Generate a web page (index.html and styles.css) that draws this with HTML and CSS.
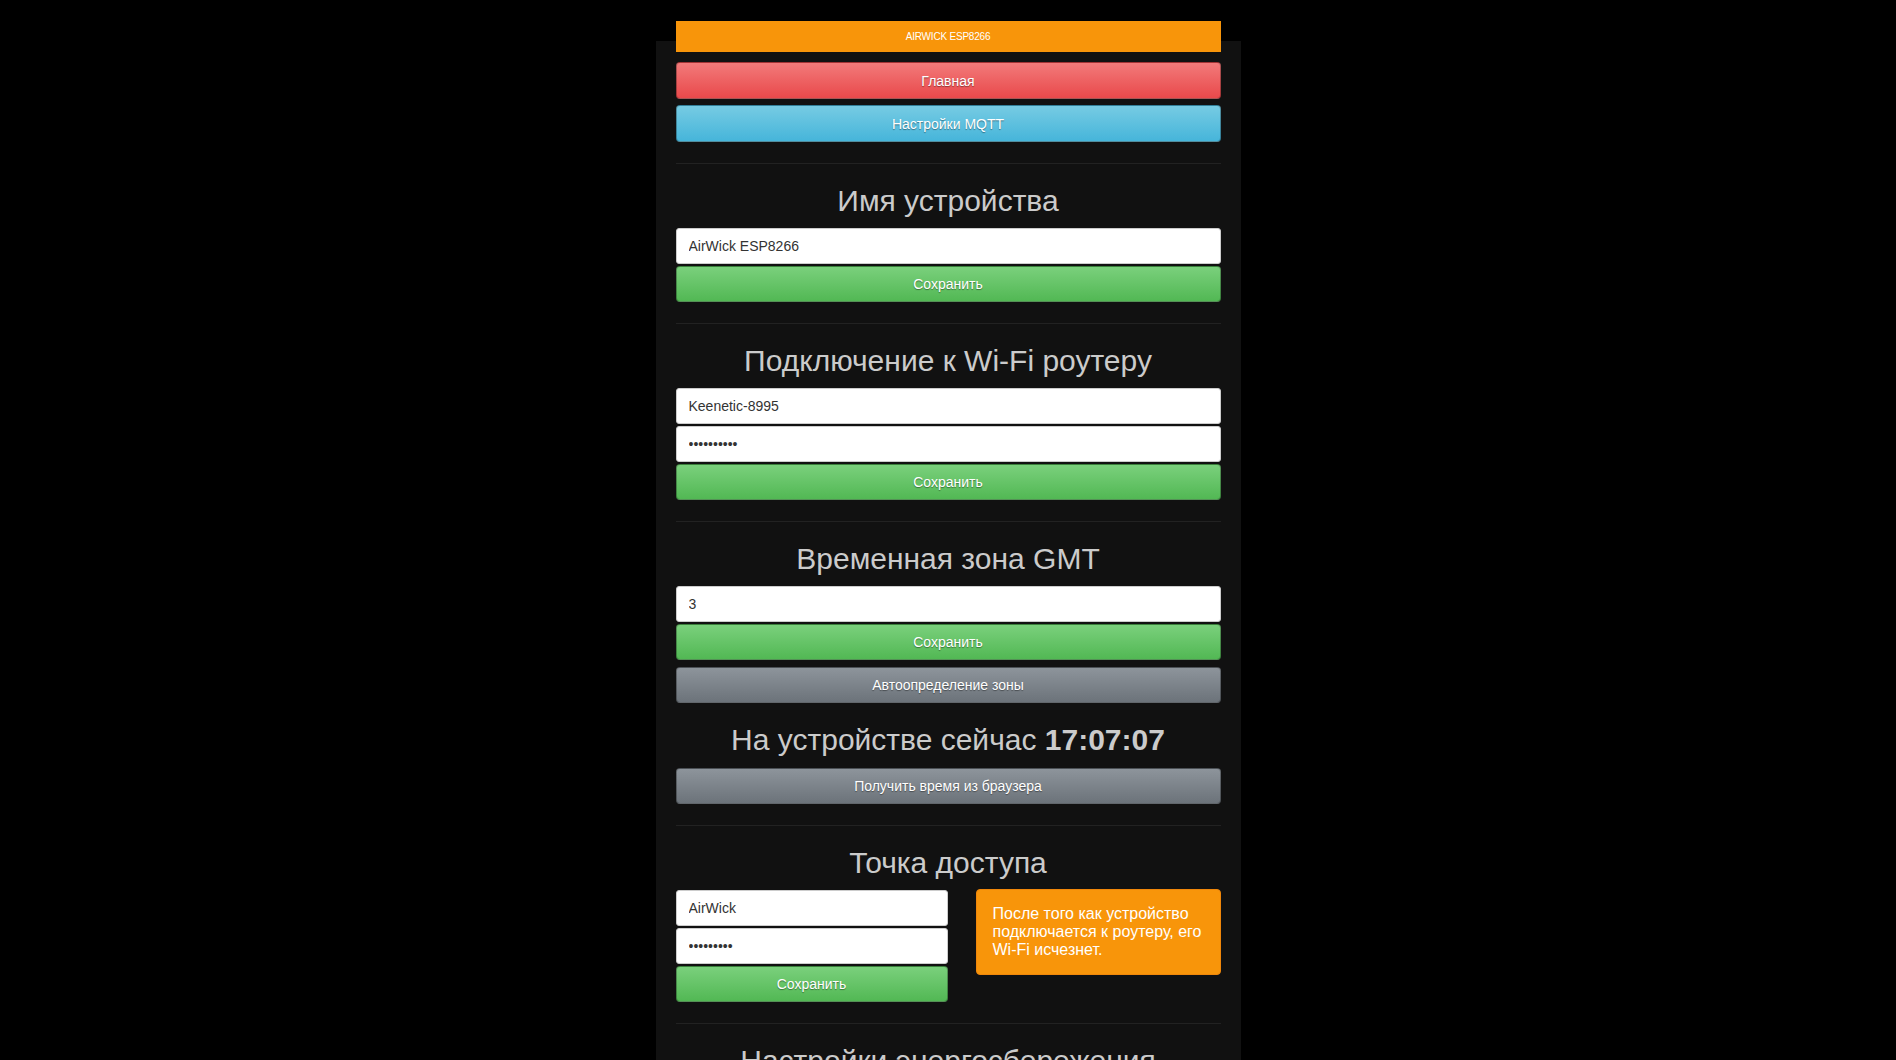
FILE: index.html
```html
<!DOCTYPE html>
<html lang="ru">
<head>
<meta charset="utf-8">
<title>AirWick ESP8266</title>
<link rel="stylesheet" href="styles.css">
</head>
<body>
<div class="page">
  <div class="topbar">AirWick ESP8266</div>
  <nav class="nav">
    <a class="btn btn-red nav-btn" href="#">Главная</a>
    <a class="btn btn-blue nav-btn" href="#">Настройки MQTT</a>
  </nav>

  <section class="block">
    <h2>Имя устройства</h2>
    <div class="stack">
      <input class="field" type="text" value="AirWick ESP8266">
      <button class="btn btn-green">Сохранить</button>
    </div>
  </section>

  <section class="block">
    <h2>Подключение к Wi-Fi роутеру</h2>
    <div class="stack">
      <input class="field" type="text" value="Keenetic-8995">
      <input class="field" type="password" value="1234567890">
      <button class="btn btn-green">Сохранить</button>
    </div>
  </section>

  <section class="block">
    <h2>Временная зона GMT</h2>
    <div class="stack">
      <input class="field" type="text" value="3">
      <button class="btn btn-green">Сохранить</button>
    </div>
    <button class="btn btn-gray gap-top">Автоопределение зоны</button>
    <h2 class="clock">На устройстве сейчас <b>17:07:07</b></h2>
    <button class="btn btn-gray">Получить время из браузера</button>
  </section>

  <section class="block">
    <h2>Точка доступа</h2>
    <div class="split">
      <div class="stack">
        <input class="field" type="text" value="AirWick">
        <input class="field" type="password" value="123456789">
        <button class="btn btn-green">Сохранить</button>
      </div>
      <div class="alert">После того как устройство подключается к роутеру, его Wi-Fi исчезнет.</div>
    </div>
  </section>

  <section class="block">
    <h2>Настройки энергосбережения</h2>
    <div class="stack">
      <input class="field" type="text" value="0">
      <button class="btn btn-green">Сохранить</button>
    </div>
  </section>
</div>
</body>
</html>
```
FILE: styles.css
```css
* { box-sizing: border-box; }

html, body {
  margin: 0;
  padding: 0;
  background: #000;
  font-family: "Liberation Sans", Arial, Helvetica, sans-serif;
  color: #ccc;
}

.page {
  display: flow-root;
  width: 585px;
  margin: 41px auto 0;
  padding: 0 20px 40px;
  background: #111;
}

.topbar {
  margin-top: -20px;
  height: 31px;
  line-height: 31px;
  background: #f8950a;
  color: #fff;
  font-size: 10px;
  text-transform: uppercase;
  text-align: center;
  letter-spacing: -0.2px;
}

.nav {
  display: flex;
  flex-direction: column;
  gap: 6px;
  margin-top: 10px;
}

.btn {
  display: block;
  width: 100%;
  height: 36px;
  line-height: 34px;
  padding: 0;
  border: 1px solid rgba(0, 0, 0, 0.3);
  border-radius: 4px;
  font-family: inherit;
  font-size: 14px;
  color: #fff;
  text-align: center;
  text-decoration: none;
  text-shadow: 0 1px 1px rgba(0, 0, 0, 0.4);
  cursor: pointer;
}

.nav-btn { height: 37px; line-height: 36px; }

.btn-red { background: linear-gradient(#f27a7a, #e9494b); }
.btn-blue { background: linear-gradient(#76cbe3, #46b5da); }
.btn-green { background: linear-gradient(#7ad07c, #52b854); }
.btn-gray { background: linear-gradient(#8d949b, #6c737a); }

.gap-top { margin-top: 7px; }

.block {
  border-top: 1px solid #222;
  margin-top: 21px;
}

h2 {
  margin: 20px 0 10px;
  font-size: 30px;
  line-height: 34px;
  font-weight: normal;
  text-align: center;
  color: #cbcbcb;
}

h2.clock { margin-bottom: 11px; }

h2 b { font-weight: bold; }

.stack {
  display: flex;
  flex-direction: column;
  gap: 2px;
}

.field {
  display: block;
  width: 100%;
  height: 36px;
  padding: 0 12px;
  border: 1px solid #ccc;
  border-radius: 3px;
  background: #fff;
  font-family: inherit;
  font-size: 14px;
  color: #333;
}

.split {
  display: grid;
  grid-template-columns: 272px 1fr;
  column-gap: 28px;
  align-items: start;
}

.alert {
  margin-top: -1px;
  padding: 15px 16px 15px;
  background: #f8950a;
  border: 1px solid #f0870a;
  border-radius: 4px;
  color: #fff;
  font-size: 16px;
  line-height: 18px;
}
```
